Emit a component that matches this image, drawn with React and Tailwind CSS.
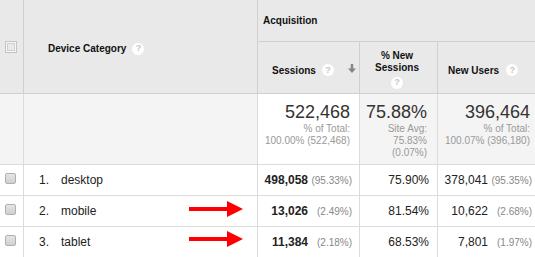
import React from "react";

const Help = () => (
  <span className="inline-flex w-[12px] h-[12px] rounded-full bg-white items-center justify-center text-[9px] font-bold leading-none text-[#c4c4c4]">?</span>
);

const HeadCheck = () => (
  <div className="w-[12px] h-[12px] border border-[#c4c4c4] bg-[#f6f6f6] p-[1px]">
    <div className="w-full h-full border border-[#cfcfcf] bg-[#e9e9e9]" />
  </div>
);

const RowCheck = () => (
  <div className="w-[11px] h-[11px] rounded-[2px] border border-[#b0b0b0] bg-gradient-to-b from-[#e6e6e6] to-[#cfcfcf]" />
);

const RedArrow = ({ top }) => (
  <svg
    className="absolute left-[165px]"
    style={{ top }}
    width="54"
    height="16"
    viewBox="0 0 54 16"
  >
    <rect x="0" y="6" width="39" height="4" fill="#ff0000" />
    <polygon points="38,0 54,8 38,16" fill="#ff0000" />
  </svg>
);

const rows = [
  { n: "1.", name: "desktop", s: "498,058", sp: "(95.33%)", pct: "75.90%", u: "378,041", up: "(95.35%)", arrow: null },
  { n: "2.", name: "mobile", s: "13,026", sp: "(2.49%)", pct: "81.54%", u: "10,622", up: "(2.68%)", arrow: 5 },
  { n: "3.", name: "tablet", s: "11,384", sp: "(2.18%)", pct: "68.53%", u: "7,801", up: "(1.97%)", arrow: 4 },
];

export default function App() {
  return (
    <div className="w-[535px] h-[257px] overflow-hidden bg-white font-['Liberation_Sans',Arial,sans-serif] text-[#222]">
      <div className="grid w-[540px] grid-cols-[24px_234px_102px_78px_102px] grid-rows-[42px_52px_71px_31px_31px_31px]">
        {/* Header */}
        <div className="row-span-2 bg-[#e9e9e9] border-r border-b border-[#d0d0d0] flex items-center pl-[5px]">
          <HeadCheck />
        </div>
        <div className="row-span-2 bg-[#e9e9e9] border-r border-b border-[#d0d0d0] flex items-center pl-[24px] pt-[4px] text-[10px] font-bold text-[#111]">
          <span>Device Category</span>
          <span className="ml-[6px] flex"><Help /></span>
        </div>
        <div className="col-span-3 bg-[#e9e9e9] border-b border-[#d0d0d0] flex items-center pl-[5px] text-[10px] font-bold text-[#111]">
          Acquisition
        </div>
        <div className="bg-[#e9e9e9] border-r border-b border-[#d0d0d0] flex items-center pl-[14px] pr-[3px] pt-[5px] text-[10px] font-bold text-[#111]">
          <span>Sessions</span>
          <span className="ml-[6px] flex"><Help /></span>
          <svg className="ml-auto mb-[4px]" width="8" height="9" viewBox="0 0 8 9">
            <path d="M2.8 0 H5.2 V4.5 H8 L4 9 L0 4.5 H2.8 Z" fill="#858585" />
          </svg>
        </div>
        <div className="bg-[#e9e9e9] border-r border-b border-[#d0d0d0] flex flex-col items-center justify-center pr-[3px] pt-[3px] text-[10px] font-bold leading-[12px] text-center text-[#111]">
          <span>% New</span>
          <span>Sessions</span>
          <span className="mt-[3px] flex"><Help /></span>
        </div>
        <div className="bg-[#e9e9e9] border-b border-[#d0d0d0] flex items-center pl-[10px] pt-[5px] text-[10px] font-bold text-[#111]">
          <span>New Users</span>
          <span className="ml-[7px] flex"><Help /></span>
        </div>

        {/* Summary */}
        <div className="bg-[#f4f4f4] border-r border-b border-[#dcdcdc]" />
        <div className="bg-[#f4f4f4] border-r border-b border-[#dcdcdc]" />
        <div className="bg-white border-r border-b border-[#dcdcdc] pt-[7px] pr-[9px] text-right">
          <div className="text-[18px] leading-[22px] text-[#333]">522,468</div>
          <div className="text-[10px] leading-[12px] text-[#999]">% of Total:</div>
          <div className="text-[10px] leading-[12px] text-[#999] whitespace-nowrap">100.00% (522,468)</div>
        </div>
        <div className="bg-[#f4f4f4] border-r border-b border-[#dcdcdc] pt-[7px] pr-[10px] text-right">
          <div className="text-[18px] leading-[22px] text-[#333]">75.88%</div>
          <div className="text-[10px] leading-[12px] text-[#999]">Site Avg:</div>
          <div className="text-[10px] leading-[12px] text-[#999]">75.83%</div>
          <div className="text-[10px] leading-[12px] text-[#999]">(0.07%)</div>
        </div>
        <div className="bg-[#f4f4f4] border-b border-[#dcdcdc] pt-[7px] pr-[10px] text-right">
          <div className="text-[18px] leading-[22px] text-[#333]">396,464</div>
          <div className="text-[10px] leading-[12px] text-[#999]">% of Total:</div>
          <div className="text-[10px] leading-[12px] text-[#999] whitespace-nowrap">100.07% (396,180)</div>
        </div>

        {/* Data rows */}
        {rows.map((r) => (
          <React.Fragment key={r.n}>
            <div className="border-r border-b border-[#dcdcdc] pl-[5px] pt-[8px]">
              <RowCheck />
            </div>
            <div className="relative border-r border-b border-[#dcdcdc] flex items-center pl-[15px] text-[12px]">
              <span className="w-[22px]">{r.n}</span>
              <span>{r.name}</span>
              {r.arrow !== null && <RedArrow top={r.arrow} />}
            </div>
            <div className="border-r border-b border-[#dcdcdc] flex items-center justify-end pr-[7px]">
              <span className="text-[12px] font-bold">{r.s}</span>
              <span className="w-[44px] text-right text-[10px] text-[#888]">{r.sp}</span>
            </div>
            <div className="border-r border-b border-[#dcdcdc] flex items-center justify-end pr-[8px] text-[12px]">
              {r.pct}
            </div>
            <div className="border-b border-[#dcdcdc] flex items-center justify-end pr-[8px]">
              <span className="text-[12px]">{r.u}</span>
              <span className="w-[44px] text-right text-[10px] text-[#888]">{r.up}</span>
            </div>
          </React.Fragment>
        ))}
      </div>
    </div>
  );
}
